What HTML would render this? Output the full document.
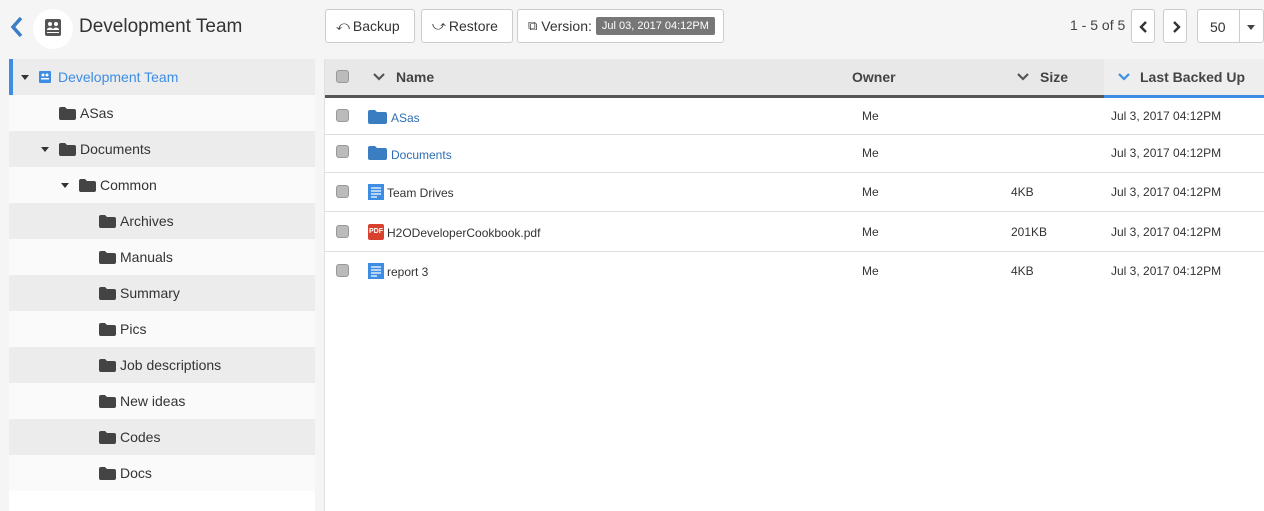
<!DOCTYPE html>
<html><head><meta charset="utf-8"><style>
*{box-sizing:border-box;margin:0;padding:0}
body{width:1264px;height:511px;overflow:hidden;background:#f5f5f5;font-family:"Liberation Sans",sans-serif;color:#333;position:relative}
.abs{position:absolute}
.btn{position:absolute;top:9px;height:34px;background:#fff;border:1px solid #ccc;border-radius:3px;font-size:14px;display:flex;align-items:center;padding-left:10px;color:#333}
.tree{position:absolute;left:9px;top:59px;width:306px}
.tr{height:36px;display:flex;align-items:center;font-size:14px;color:#333;background:#fbfafa}
.tr.g{background:#ececec}
.fold{display:inline-block;width:17px;height:13px;margin-right:4px;position:relative}
.caret{display:inline-block;width:0;height:0;border-left:4px solid transparent;border-right:4px solid transparent;border-top:5px solid #333;margin-right:10px}
.panel{position:absolute;left:324px;top:59px;width:940px;height:452px;background:#fff;border-left:1px solid #e0e0e0}
.hd{height:39px;background:#e8e8e8;border-bottom:3px solid #555;position:relative;font-weight:bold;font-size:14px;color:#444}
.hd span{position:absolute;top:10px}
.row{position:relative;border-bottom:1px solid #ddd;font-size:12px;color:#333}
.row span{position:absolute}
.cb{position:absolute;left:11px;width:13px;height:13px;background:#bbb;border:1px solid #999;border-radius:3px}
</style></head><body>
<svg class="abs" style="left:10px;top:16px" width="14" height="22" viewBox="0 0 14 22"><path d="M11 2 L3 11 L11 20" stroke="#3a7dc9" stroke-width="3.5" fill="none"/></svg>
<div class="abs" style="left:33px;top:9px;width:40px;height:40px;border-radius:50%;background:#fff"></div>
<svg class="abs" style="left:44px;top:18px" width="18" height="20" viewBox="0 0 18 20"><rect x="1" y="1" width="16" height="17" rx="2" fill="#555"/><circle cx="6" cy="6" r="2" fill="#fff"/><circle cx="12" cy="6" r="2" fill="#fff"/><path d="M3 11q3-3 6 0q3-3 6 0v1H3z" fill="#fff"/><rect x="3" y="14" width="12" height="1" fill="#fff"/></svg>
<div class="abs" style="left:79px;top:16px;font-size:19px;color:#333">Development Team</div>

<div class="btn" style="left:325px;width:90px"><span style="font-size:13px;margin-right:3px">⤺</span>Backup</div>
<div class="btn" style="left:421px;width:92px"><span style="font-size:13px;margin-right:3px">⤻</span>Restore</div>
<div class="btn" style="left:517px;width:207px"><span style="font-size:13px;margin-right:4px">⧉</span>Version:<span style="margin-left:4px;background:#777;color:#fff;font-size:11px;padding:3px 6px;border-radius:2px">Jul 03, 2017 04:12PM</span></div>

<div class="abs" style="left:1070px;top:17px;font-size:14px;color:#444">1 - 5 of 5</div>
<div class="abs" style="left:1131px;top:9px;width:24px;height:34px;background:#fff;border:1px solid #ccc;border-radius:3px"><svg class="abs" style="left:7px;top:11px" width="9" height="12"><path d="M7 1L2 6l5 5" stroke="#333" stroke-width="2.4" fill="none"/></svg></div>
<div class="abs" style="left:1163px;top:9px;width:24px;height:34px;background:#fff;border:1px solid #ccc;border-radius:3px"><svg class="abs" style="left:8px;top:11px" width="9" height="12"><path d="M2 1l5 5-5 5" stroke="#333" stroke-width="2.4" fill="none"/></svg></div>
<div class="abs" style="left:1197px;top:9px;width:67px;height:34px;background:#fff;border:1px solid #ccc;border-radius:3px;font-size:14px"><span style="position:absolute;left:12px;top:9px">50</span><div style="position:absolute;left:41px;top:0;bottom:0;border-left:1px solid #ccc"></div><div style="position:absolute;left:49px;top:15px;border-left:4px solid transparent;border-right:4px solid transparent;border-top:5px solid #444"></div></div>

<div class="tree">
<div class="tr g" style="border-left:4px solid #3d8de5;padding-left:8px;color:#3d8de5"><span class="caret"></span><svg width="13" height="13" style="margin-right:6px"><rect x="0" y="0" width="12" height="12" rx="1" fill="#3d8de5"/><circle cx="4" cy="4" r="1.5" fill="#fff"/><circle cx="8" cy="4" r="1.5" fill="#fff"/><rect x="2" y="7" width="8" height="1.5" fill="#fff"/></svg>Development Team</div>
<div class="tr" style="padding-left:50px"><svg class="fold" viewBox="0 0 17 13"><path d="M0 2q0-2 2-2h4l2 2h7q2 0 2 2v7q0 2-2 2H2q-2 0-2-2z" fill="#444"/></svg>ASas</div>
<div class="tr g" style="padding-left:32px"><span class="caret"></span><svg class="fold" viewBox="0 0 17 13"><path d="M0 2q0-2 2-2h4l2 2h7q2 0 2 2v7q0 2-2 2H2q-2 0-2-2z" fill="#444"/></svg>Documents</div>
<div class="tr" style="padding-left:52px"><span class="caret"></span><svg class="fold" viewBox="0 0 17 13"><path d="M0 2q0-2 2-2h4l2 2h7q2 0 2 2v7q0 2-2 2H2q-2 0-2-2z" fill="#444"/></svg>Common</div>
<div class="tr g" style="padding-left:90px"><svg class="fold" viewBox="0 0 17 13"><path d="M0 2q0-2 2-2h4l2 2h7q2 0 2 2v7q0 2-2 2H2q-2 0-2-2z" fill="#444"/></svg>Archives</div>
<div class="tr" style="padding-left:90px"><svg class="fold" viewBox="0 0 17 13"><path d="M0 2q0-2 2-2h4l2 2h7q2 0 2 2v7q0 2-2 2H2q-2 0-2-2z" fill="#444"/></svg>Manuals</div>
<div class="tr g" style="padding-left:90px"><svg class="fold" viewBox="0 0 17 13"><path d="M0 2q0-2 2-2h4l2 2h7q2 0 2 2v7q0 2-2 2H2q-2 0-2-2z" fill="#444"/></svg>Summary</div>
<div class="tr" style="padding-left:90px"><svg class="fold" viewBox="0 0 17 13"><path d="M0 2q0-2 2-2h4l2 2h7q2 0 2 2v7q0 2-2 2H2q-2 0-2-2z" fill="#444"/></svg>Pics</div>
<div class="tr g" style="padding-left:90px"><svg class="fold" viewBox="0 0 17 13"><path d="M0 2q0-2 2-2h4l2 2h7q2 0 2 2v7q0 2-2 2H2q-2 0-2-2z" fill="#444"/></svg>Job descriptions</div>
<div class="tr" style="padding-left:90px"><svg class="fold" viewBox="0 0 17 13"><path d="M0 2q0-2 2-2h4l2 2h7q2 0 2 2v7q0 2-2 2H2q-2 0-2-2z" fill="#444"/></svg>New ideas</div>
<div class="tr g" style="padding-left:90px"><svg class="fold" viewBox="0 0 17 13"><path d="M0 2q0-2 2-2h4l2 2h7q2 0 2 2v7q0 2-2 2H2q-2 0-2-2z" fill="#444"/></svg>Codes</div>
<div class="tr" style="padding-left:90px"><svg class="fold" viewBox="0 0 17 13"><path d="M0 2q0-2 2-2h4l2 2h7q2 0 2 2v7q0 2-2 2H2q-2 0-2-2z" fill="#444"/></svg>Docs</div>
<div style="height:20px;background:#fff"></div>
</div>

<div class="panel">
<div class="hd">
<div class="cb" style="top:11px"></div>
<svg class="abs" style="left:48px;top:14px" width="12" height="8"><path d="M1 1l5 5 5-5" stroke="#555" stroke-width="2.2" fill="none"/></svg>
<span style="left:71px">Name</span>
<span style="left:527px">Owner</span>
<svg class="abs" style="left:692px;top:14px" width="12" height="8"><path d="M1 1l5 5 5-5" stroke="#555" stroke-width="2.2" fill="none"/></svg>
<span style="left:715px">Size</span>
<div class="abs" style="left:779px;top:0;width:161px;height:39px;border-bottom:3px solid #3d8de5;background:#eeeeee"></div>
<svg class="abs" style="left:793px;top:14px" width="12" height="8"><path d="M1 1l5 5 5-5" stroke="#3d8de5" stroke-width="2.2" fill="none"/></svg>
<span style="left:815px">Last Backed Up</span>
</div>
<div class="row" style="height:37px"><div class="cb" style="top:11px"></div><svg class="abs" style="left:43px;top:12px" width="19" height="14"><path d="M0 2q0-2 2-2h5l2 2h8q2 0 2 2v8q0 2-2 2H2q-2 0-2-2z" fill="#3a7dc0"/></svg><span style="left:66px;top:13px;color:#2d6eb5">ASas</span><span style="left:537px;top:11px">Me</span><span style="left:786px;top:11px">Jul 3, 2017 04:12PM</span></div>
<div class="row" style="height:38px"><div class="cb" style="top:10px"></div><svg class="abs" style="left:43px;top:11px" width="19" height="14"><path d="M0 2q0-2 2-2h5l2 2h8q2 0 2 2v8q0 2-2 2H2q-2 0-2-2z" fill="#3a7dc0"/></svg><span style="left:66px;top:13px;color:#2d6eb5">Documents</span><span style="left:537px;top:11px">Me</span><span style="left:786px;top:11px">Jul 3, 2017 04:12PM</span></div>
<div class="row" style="height:39px"><div class="cb" style="top:12px"></div><svg class="abs" style="left:43px;top:11px" width="16" height="16"><rect width="16" height="16" fill="#3d8de5"/><path d="M3 4h10M3 7h10M3 10h10M3 13h6" stroke="#fff" stroke-width="1.2"/></svg><span style="left:62px;top:13px">Team Drives</span><span style="left:537px;top:12px">Me</span><span style="left:686px;top:12px">4KB</span><span style="left:786px;top:12px">Jul 3, 2017 04:12PM</span></div>
<div class="row" style="height:40px"><div class="cb" style="top:13px"></div><div class="abs" style="left:43px;top:12px;width:16px;height:16px;background:#d9412f;border-radius:2px;color:#fff;font-size:7px;font-weight:bold;line-height:16px;text-align:center">PDF</div><span style="left:62px;top:14px">H2ODeveloperCookbook.pdf</span><span style="left:537px;top:13px">Me</span><span style="left:686px;top:13px">201KB</span><span style="left:786px;top:13px">Jul 3, 2017 04:12PM</span></div>
<div class="row" style="height:40px;border-bottom:none"><div class="cb" style="top:12px"></div><svg class="abs" style="left:43px;top:11px" width="16" height="16"><rect width="16" height="16" fill="#3d8de5"/><path d="M3 4h10M3 7h10M3 10h10M3 13h6" stroke="#fff" stroke-width="1.2"/></svg><span style="left:62px;top:13px">report 3</span><span style="left:537px;top:12px">Me</span><span style="left:686px;top:12px">4KB</span><span style="left:786px;top:12px">Jul 3, 2017 04:12PM</span></div>
</div>
</body></html>
